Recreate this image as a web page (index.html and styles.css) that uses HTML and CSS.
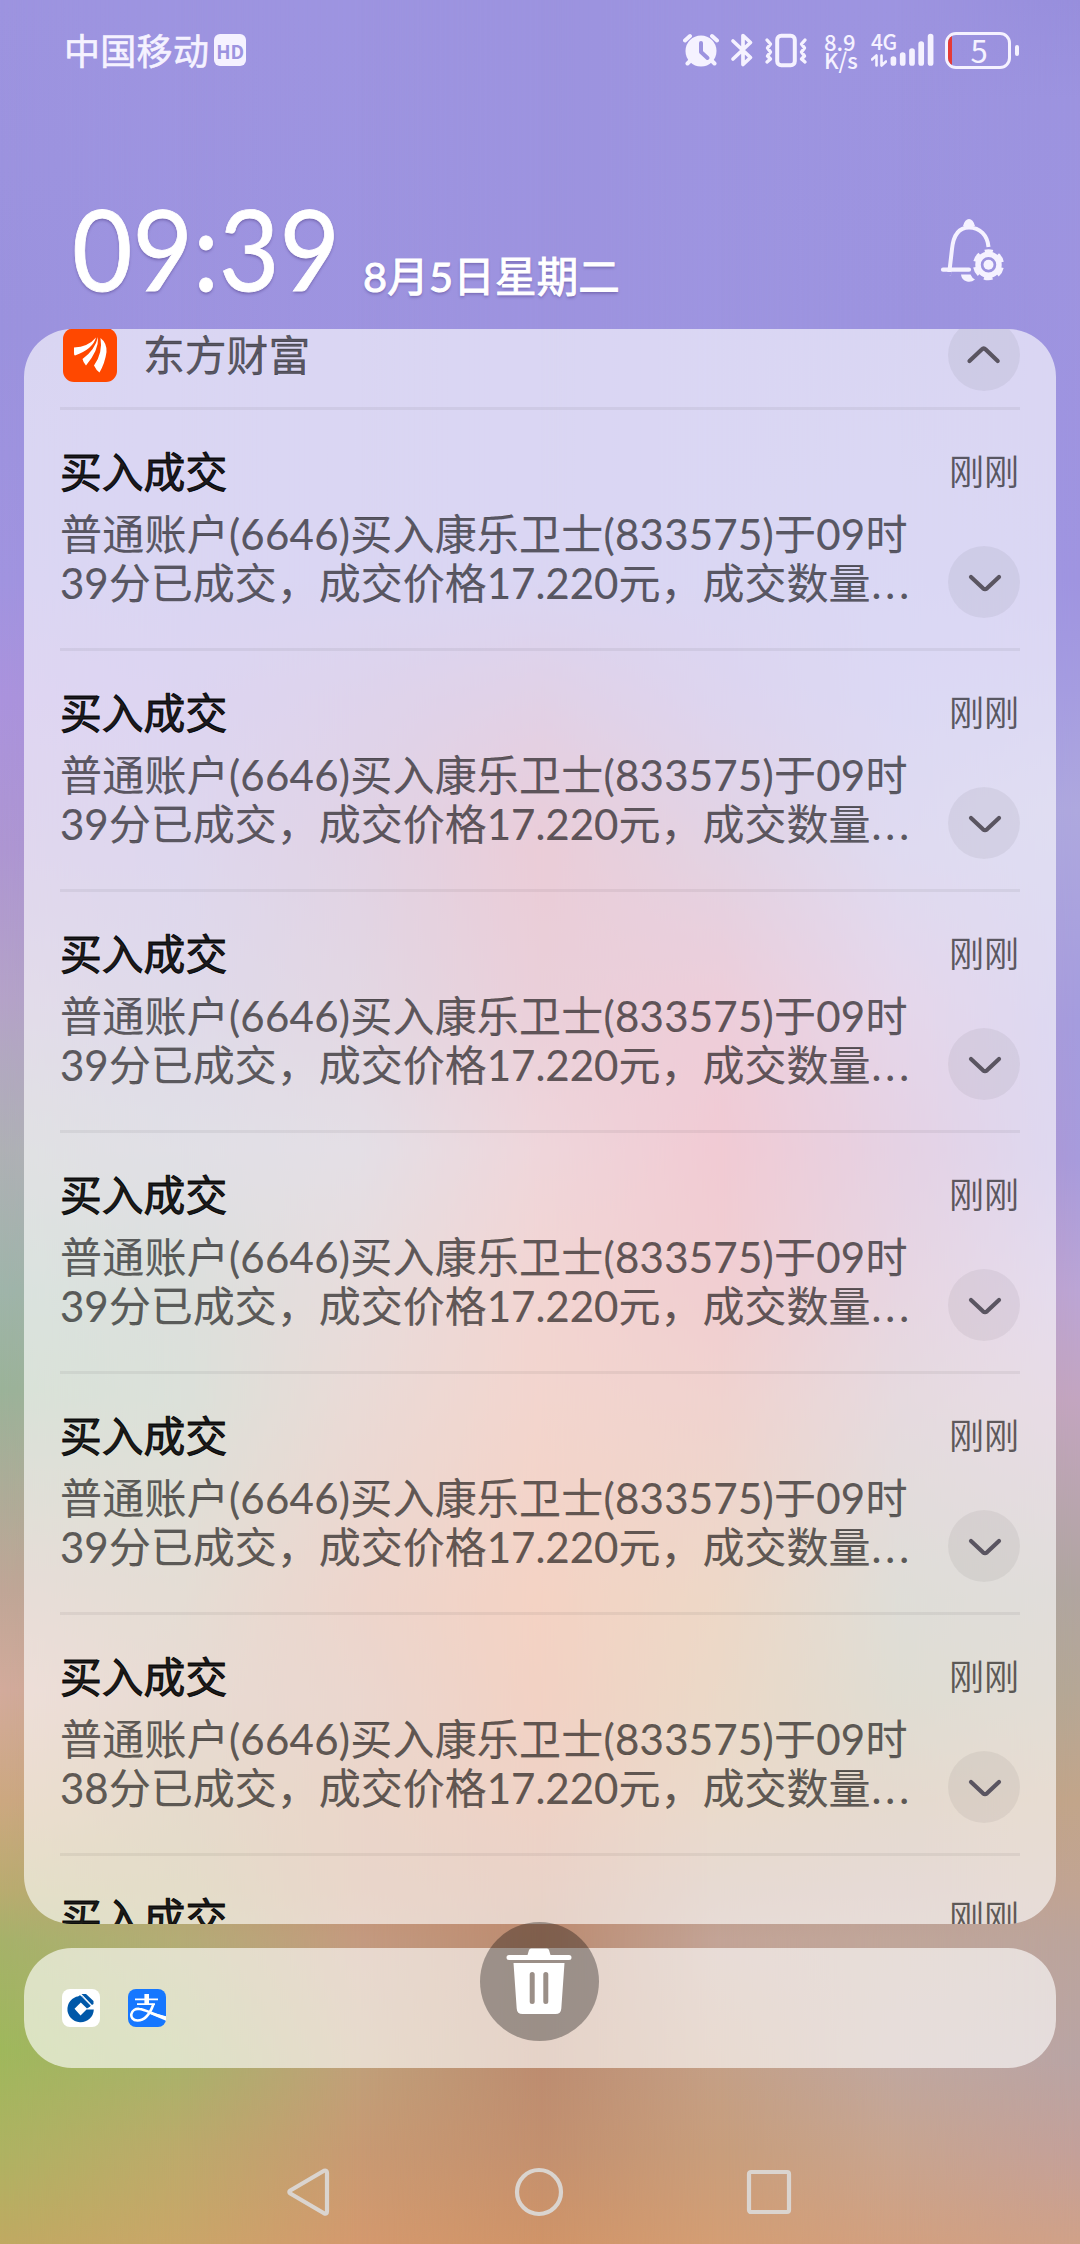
FILE: index.html
```
<!DOCTYPE html>
<html lang="zh-CN">
<head>
<meta charset="utf-8">
<title>通知中心</title>
<link rel="stylesheet" href="styles.css">
</head>
<body>
<svg class="defs" width="0" height="0" aria-hidden="true">
  <symbol id="down" viewBox="0 0 72 72"><path d="M23 31 L35 42.300 Q37 44 39 42.300 L51 31" fill="none" stroke="#5a5561" stroke-width="4.200" stroke-linecap="round" stroke-linejoin="round"/></symbol>
  <symbol id="up" viewBox="0 0 72 72"><path d="M21.500 42 L33.700 30.500 Q35.700 28.500 37.700 30.500 L49.700 42" fill="none" stroke="#5a5561" stroke-width="4.200" stroke-linecap="round" stroke-linejoin="round"/></symbol>
</svg>
<div class="screen">
  <div class="wallpaper"><i class="w1"></i><i class="w2"></i><i class="w3"></i><i class="w4"></i><i class="w5"></i><i class="w6"></i><i class="w7"></i></div>

  <header class="status">
    <div class="carrier"><span>中国移动</span><b class="hd">HD</b></div>
    <div class="indicators">
      <svg class="alarm" width="36" height="36" viewBox="0 0 36 36"><circle cx="18" cy="19" r="15.500" fill="currentColor"/><path d="M2 8.500 L7 4 M34 8.500 L29 4 M7 29 L4.500 31.500 M29 29 L31.500 31.500" stroke="currentColor" stroke-width="4" stroke-linecap="round"/><path d="M18 11 V20 L24.500 26" fill="none" stroke="#9c93df" stroke-width="4" stroke-linecap="round" stroke-linejoin="round"/></svg>
      <svg class="bt" width="24" height="36" viewBox="0 0 24 36"><path d="M3 9 L20.500 25.500 L13 32.500 V3.500 L20.500 10.500 L3 27" fill="none" stroke="currentColor" stroke-width="3.700" stroke-linecap="round" stroke-linejoin="round"/></svg>
      <svg class="vibe" width="44" height="36" viewBox="0 0 44 36"><rect x="13.200" y="3.700" width="17.600" height="29.600" rx="4" fill="none" stroke="currentColor" stroke-width="4"/><path d="M3 8 L6.500 12 L3.500 16 L6.500 20 L3.500 24 L6.500 27 L3 30 M41 8 L37.500 12 L40.500 16 L37.500 20 L40.500 24 L37.500 27 L41 30" fill="none" stroke="currentColor" stroke-width="3.400" stroke-linecap="round" stroke-linejoin="round"/></svg>
      <div class="speed"><span>8.9</span><span>K/s</span></div>
      <div class="signal">
        <div class="net"><span>4G</span><svg width="16" height="13" viewBox="0 0 16 13"><path d="M1 5.500 L5.500 1.500 V11.500 M15 7.500 L10.500 11.500 V1.500" fill="none" stroke="currentColor" stroke-width="2.600" stroke-linejoin="round" stroke-linecap="round"/></svg></div>
        <svg class="bars" width="44" height="36" viewBox="0 0 44 36" stroke="currentColor" stroke-width="5.700" stroke-linecap="round"><path d="M3.400 27 V31 M12.700 23 V31 M22 19 V31 M31.200 12 V31 M40.600 4.500 V31"/></svg>
      </div>
      <div class="battery"><i class="level"></i><span>5</span></div><i class="nub"></i>
    </div>
  </header>

  <section class="clock-row">
    <div class="clock"><span>09:39</span></div>
    <div class="date">8月5日星期二</div>
    <svg class="bell" width="68" height="68" viewBox="0 0 68 68">
      <path d="M10 59 L13 33 C14.500 18 20 11.500 30 11.500 C41 11.500 48.500 19.500 49.500 31" fill="none" stroke="currentColor" stroke-width="4"/>
      <path d="M24 10 Q26 3 30 3 Q34 3 36 10 Z" fill="currentColor"/>
      <path d="M4 53.700 H30" stroke="currentColor" stroke-width="4.200" stroke-linecap="round"/>
      <path d="M22 58.500 H31.500 Q33 62 36 63.500 Q32.500 66.500 28 65.500 Q22.500 64 22 58.500 Z" fill="currentColor"/>
      <path d="M10 59 V56" stroke="#9c93df" stroke-width="5"/>
      <circle cx="49.500" cy="48.700" r="10.500" fill="none" stroke="currentColor" stroke-width="5.500"/>
      <circle cx="49.500" cy="48.700" r="12.800" fill="none" stroke="currentColor" stroke-width="5.500" stroke-dasharray="8 5.404" stroke-dashoffset="4" transform="rotate(-90 49.500 48.700)"/>
      <circle cx="49.500" cy="48.700" r="5" fill="currentColor"/>
    </svg>
  </section>

  <main class="panel">
    <div class="app-head">
      <svg class="app-icon" width="54" height="54" viewBox="0 0 54 54"><rect width="54" height="54" rx="11" fill="#ff4800"/><path d="M11 19.500 Q25 19 33 9.500 Q30 21 12 27.500 Q11 27.500 11 25 Z M35 9 Q36 22 23 37.500 Q20 34 19.500 31 Q32 22 35 9 Z M37.500 10 Q44 15 43.500 24 Q42 35 36.500 44.500 Q33 42 31 37.500 Q40 25 37.500 10 Z" fill="#fff"/></svg>
      <span class="app-name">东方财富</span>
      <svg class="toggle" width="72" height="72"><use href="#up"/></svg>
    </div>
    <article class="note"><div class="top"><h2>买入成交</h2><time>刚刚</time></div><div class="body"><p><span class="first">普通账户(6646)买入康乐卫士(833575)于09时</span><br>39分已成交，成交价格17.220元，成交数量<span class="dots">...</span></p><svg class="toggle" width="72" height="72"><use href="#down"/></svg></div></article>
    <article class="note"><div class="top"><h2>买入成交</h2><time>刚刚</time></div><div class="body"><p><span class="first">普通账户(6646)买入康乐卫士(833575)于09时</span><br>39分已成交，成交价格17.220元，成交数量<span class="dots">...</span></p><svg class="toggle" width="72" height="72"><use href="#down"/></svg></div></article>
    <article class="note"><div class="top"><h2>买入成交</h2><time>刚刚</time></div><div class="body"><p><span class="first">普通账户(6646)买入康乐卫士(833575)于09时</span><br>39分已成交，成交价格17.220元，成交数量<span class="dots">...</span></p><svg class="toggle" width="72" height="72"><use href="#down"/></svg></div></article>
    <article class="note"><div class="top"><h2>买入成交</h2><time>刚刚</time></div><div class="body"><p><span class="first">普通账户(6646)买入康乐卫士(833575)于09时</span><br>39分已成交，成交价格17.220元，成交数量<span class="dots">...</span></p><svg class="toggle" width="72" height="72"><use href="#down"/></svg></div></article>
    <article class="note"><div class="top"><h2>买入成交</h2><time>刚刚</time></div><div class="body"><p><span class="first">普通账户(6646)买入康乐卫士(833575)于09时</span><br>39分已成交，成交价格17.220元，成交数量<span class="dots">...</span></p><svg class="toggle" width="72" height="72"><use href="#down"/></svg></div></article>
    <article class="note"><div class="top"><h2>买入成交</h2><time>刚刚</time></div><div class="body"><p><span class="first">普通账户(6646)买入康乐卫士(833575)于09时</span><br>38分已成交，成交价格17.220元，成交数量<span class="dots">...</span></p><svg class="toggle" width="72" height="72"><use href="#down"/></svg></div></article>
    <article class="note"><div class="top"><h2>买入成交</h2><time>刚刚</time></div></article>
  </main>

  <section class="more">
    <svg width="38" height="38" viewBox="0 0 38 38"><rect width="38" height="38" rx="8" fill="#fff"/><path d="M20 7 A13.200 13.200 0 1 0 31.800 20.500 H24.500 L18.500 26.500 L12.500 19.800 L18.800 13.500 L25 19.500 L28.500 17 Z" fill="#0058a8"/><path d="M19.500 5 H24 L31.500 12 V15 L30 16 Z M18 6 L29 16.500 L26.500 18.500 L16 8 Z" fill="#0058a8"/><path d="M19 6.500 L29.500 17" stroke="#fff" stroke-width=".8"/></svg>
    <svg width="38" height="38" viewBox="0 0 38 38"><rect width="38" height="38" rx="8" fill="#1677ff"/><path d="M7 10.300 H30 M9 15.200 H27" stroke="#fff" stroke-width="1.700"/><path d="M18.700 5 V15" stroke="#fff" stroke-width="4.600"/><path d="M25.500 15 C22 25 17 31.500 9.500 31.500 C4.500 31.500 3 28 3.300 25.300 C4 21.500 7.500 19.500 11.500 20 C18 20.500 24 25.500 38 29" fill="none" stroke="#fff" stroke-width="2.600"/><path d="M20 22.500 L38 27.300 V31.700 L22 25 Z" fill="#fff"/></svg>
    <div class="trash"><svg width="66" height="66" viewBox="0 0 66 66" fill="#fff"><path d="M21.500 7 L23 2 Q23.500 .5 25 .5 H41 Q42.500 .5 43 2 L44.500 7 H63 Q65.500 7 65.500 9.500 Q65.500 12 63 12 H3 Q.5 12 .5 9.500 Q.5 7 3 7 Z"/><path fill-rule="evenodd" d="M7.500 15 H58.500 L55.300 60.500 Q55 66 49.500 66 H16.500 Q11 66 10.700 60.500 Z M26.200 24 A2.500 2.500 0 0 0 23.700 26.500 V53.500 A2.500 2.500 0 0 0 28.700 53.500 V26.500 A2.500 2.500 0 0 0 26.200 24 Z M39.800 24 A2.500 2.500 0 0 0 37.300 26.500 V53.500 A2.500 2.500 0 0 0 42.300 53.500 V26.500 A2.500 2.500 0 0 0 39.800 24 Z"/></svg></div>
  </section>

  <nav class="nav">
    <svg width="50" height="50" viewBox="0 0 50 50"><path d="M6.300 23.500 L40 3.800 Q43 3 43 6 V44.500 Q43 47.500 40 46.200 L6.300 26.500 Q4.300 25 6.300 23.500 Z"/></svg>
    <svg width="50" height="50" viewBox="0 0 50 50"><circle cx="25" cy="25" r="22"/></svg>
    <svg width="50" height="50" viewBox="0 0 50 50"><rect x="5" y="5" width="40" height="40" rx="2"/></svg>
  </nav>
</div>
</body>
</html>
```
FILE: styles.css
```
* { box-sizing: border-box; margin: 0; padding: 0; }
body { width: 1080px; height: 2244px; overflow: hidden; font-family: Lato, "Noto Sans CJK SC", sans-serif; }
.defs { display: none; }
.screen { position: relative; isolation: isolate; width: 1080px; height: 2244px; display: flex; flex-direction: column; overflow: hidden; }

/* Wallpaper: vertical colour ramps, each fading in over the previous one */
.wallpaper { position: absolute; inset: 0; z-index: -1; }
.wallpaper i { position: absolute; inset: 0; }
.w1 { background: linear-gradient(#9d94e0 0, #9b92de 330px, #a194e0 580px, #ab93dd 700px, #ae96d2 850px, #b5a3c8 1000px, #afb1b5 1150px, #9fb5aa 1290px, #9bb399 1390px, #c0a697 1590px, #d3ab9c 1690px, #cda881 1800px, #b9ac70 1890px, #a6b26a 1940px, #9fb85c 2050px, #aeb362 2150px, #c0aa62 2244px); }
.w2 { background: linear-gradient(#9d94e0 0, #9e93df 580px, rgb(165,144,218) 700px, rgb(168,150,210) 850px, rgb(171,158,200) 1000px, rgb(176,173,189) 1150px, rgb(162,173,165) 1290px, rgb(162,176,157) 1400px, rgb(187,166,144) 1600px, rgb(194,160,139) 1700px, rgb(189,160,123) 1800px, rgb(184,165,113) 1890px, #b4ac76 1940px, #a8b26a 2060px, #bcaa6b 2150px, #caa668 2244px); }
.w3 { background: linear-gradient(#9d94e0 0, #9e93df 580px, rgb(169,141,204) 700px, rgb(177,140,185) 850px, rgb(181,150,181) 1000px, rgb(184,171,189) 1150px, rgb(194,163,163) 1290px, rgb(200,158,147) 1400px, rgb(208,145,121) 1600px, rgb(202,149,128) 1700px, rgb(202,147,115) 1800px, rgb(197,147,117) 1890px, #c49a80 1940px, #c0a07a 2060px, #c89a73 2150px, #d4996e 2244px); }
.w4 { background: linear-gradient(#9c93df 0, #9e93df 580px, rgb(177,135,190) 700px, rgb(202,123,152) 850px, rgb(200,129,155) 1000px, rgb(213,147,160) 1150px, rgb(221,145,137) 1290px, rgb(223,145,126) 1400px, rgb(226,139,100) 1600px, rgb(221,136,100) 1700px, rgb(213,137,105) 1800px, rgb(197,139,112) 1890px, #bb8b70 1940px, #bc8c70 2060px, #c3906f 2150px, #d09468 2244px); }
.w5 { background: linear-gradient(#9d94e0 0, #9e95e0 580px, rgb(166,144,213) 700px, rgb(181,139,181) 850px, rgb(208,125,157) 1000px, rgb(218,118,142) 1150px, rgb(218,126,134) 1290px, rgb(215,139,129) 1400px, rgb(208,152,108) 1600px, rgb(202,155,110) 1700px, rgb(200,158,118) 1800px, rgb(191,158,139) 1890px, #c3a497 1940px, #c4a087 2060px, #c89e7c 2150px, #d49e74 2244px); }
.w6 { background: linear-gradient(#9d94e0 0, #9c93df 330px, #9f98e2 580px, rgb(163,155,226) 700px, rgb(171,160,218) 850px, rgb(187,150,202) 1000px, rgb(187,137,184) 1150px, rgb(192,147,179) 1290px, rgb(189,158,171) 1400px, rgb(171,168,152) 1600px, rgb(173,165,139) 1700px, rgb(187,158,129) 1800px, rgb(189,158,147) 1890px, #c0a69a 1940px, #bfa7a0 2060px, #c8a590 2150px, #d2a080 2244px); }
.w7 { background: linear-gradient(#978edc 0, #9c93df 100px, #9f94e0 580px, #a59ce0 690px, #aea8de 810px, #a49cde 1020px, #a79bdc 1160px, #bba5d5 1290px, #c3a5c0 1400px, #b0a5a0 1590px, #b5a796 1690px, #c2a58a 1800px, #c1a493 1890px, #bba49c 1940px, #b9a4a4 2060px, #c3a09a 2150px, #d0a188 2244px); }
.w2 { mask-image: linear-gradient(90deg, transparent 0, #000 180px); }
.w3 { mask-image: linear-gradient(90deg, transparent 180px, #000 360px); }
.w4 { mask-image: linear-gradient(90deg, transparent 360px, #000 540px); }
.w5 { mask-image: linear-gradient(90deg, transparent 540px, #000 720px); }
.w6 { mask-image: linear-gradient(90deg, transparent 720px, #000 900px); }
.w7 { mask-image: linear-gradient(90deg, transparent 900px, #000 1080px); }

.status { height: 100px; padding: 0 61px 0 64px; display: flex; justify-content: space-between; align-items: center; color: #f5f2ff; }
.carrier { display: flex; align-items: center; gap: 5px; font-size: 36px; line-height: 48px; letter-spacing: .3px; }
.carrier span { font-family: "Noto Sans CJK SC", sans-serif; -webkit-text-stroke: .6px; margin-top: -3px; }
.hd { width: 32px; height: 32px; border-radius: 6px; background: #f5f2ff; color: #9c93df; font: 700 19px/33px "Noto Sans CJK SC", sans-serif; letter-spacing: 0; text-align: center; }
.indicators { display: flex; align-items: center; height: 40px; }
.bt { margin-left: 11px; }
.vibe { margin-left: 10px; }
.speed { margin-left: 16px; width: 33px; display: flex; flex-direction: column; font: 500 22px/18.500px "Noto Sans CJK SC", sans-serif; }
.signal { margin-left: 14px; display: flex; align-items: center; }
.net { width: 19px; height: 38px; display: flex; flex-direction: column; font: 500 21px/20px "Noto Sans CJK SC", sans-serif; letter-spacing: -.5px; }
.net svg { margin-top: 3px; flex: none; }
.battery { margin-left: 11px; width: 66px; height: 37px; border: 3px solid; border-radius: 11px; overflow: hidden; display: flex; align-items: center; font: 400 31px/31px "Noto Sans CJK SC", sans-serif; }
.level { width: 4px; height: 31px; background: #e53a36; }
.battery span { flex: 1; text-align: center; padding-right: 2px; margin-top: -2px; }
.nub { width: 4px; height: 11px; border-radius: 2px; margin-left: 4px; background: currentColor; }

.clock-row { height: 229px; padding: 107px 73px 0 72px; display: flex; align-items: flex-start; color: #fff; text-shadow: 0 2px 3px rgba(40,20,90,.35); }
.clock { width: 291px; font-size: 113px; line-height: 80px; }
.clock span { display: inline-block; transform: scaleX(.923); transform-origin: 0 0; -webkit-text-stroke: .8px; }
.date { font: 400 41.500px/60px Lato, "Noto Sans CJK SC", sans-serif; letter-spacing: .2px; margin-top: 39px; -webkit-text-stroke: 1px; white-space: nowrap; }
.bell { margin: 9px 0 0 auto; color: #f5f2ff; }

.panel { height: 1595px; margin: 0 24px; border-radius: 48px; overflow: hidden; background: rgba(255,255,255,.62); color: rgba(0,0,0,.6); flex: none; }
.app-head { height: 78px; padding: 0 36px 0 39px; display: flex; align-items: flex-start; }
.app-icon { margin-top: -1px; }
.app-name { margin-left: 26px; font-size: 41.800px; line-height: 52px; -webkit-text-stroke: .4px; }
.toggle { flex: none; border-radius: 50%; background: rgba(0,0,0,.05); }
.app-head .toggle { margin: -10px 0 0 auto; }
.note { height: 241px; margin: 0 36px; border-top: 3px solid rgba(0,0,0,.055); padding-top: 32px; }
.top { display: flex; justify-content: space-between; height: 68px; padding-right: 1px; }
.top h2 { font: 400 41.800px/56px "Noto Sans CJK SC", sans-serif; color: rgba(0,0,0,.9); -webkit-text-stroke: 1px; }
.top time { font: 400 35px/56px "Noto Sans CJK SC", sans-serif; }
.body { display: flex; justify-content: space-between; align-items: flex-start; }
.body p { font-size: 42px; line-height: 49px; white-space: nowrap; -webkit-text-stroke: .2px; }
.first { letter-spacing: .23px; }
.body .toggle { margin-top: 36px; }
.dots { letter-spacing: 4px; margin-left: 1px; }

.more { position: relative; height: 120px; margin: 24px 24px 0; border-radius: 48px; background: rgba(255,255,255,.62); padding: 0 38px; display: flex; align-items: center; gap: 28px; flex: none; }
.trash { position: absolute; left: 455.500px; top: -26px; width: 119px; height: 119px; border-radius: 50%; background: rgba(0,0,0,.32); display: flex; justify-content: center; padding-top: 26px; }
.nav { height: 176px; padding: 99px 286px 0 284px; display: flex; justify-content: space-between; }
.nav svg { fill: none; stroke: #dad4cf; stroke-width: 4.200; stroke-linejoin: round; }
```
